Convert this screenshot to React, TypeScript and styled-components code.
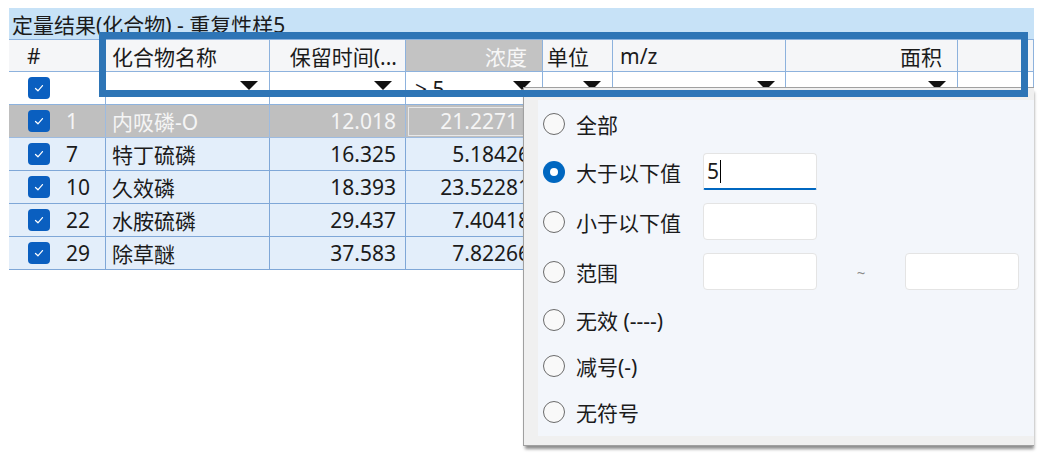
import React from "react";
import styled, { createGlobalStyle, css } from "styled-components";

const GlobalStyle = createGlobalStyle`
  * { box-sizing: border-box; }
  html, body { margin: 0; padding: 0; background: #ffffff; }
  body {
    font-family: "Noto Sans", "Noto Sans CJK SC", sans-serif;
    color: #1b1b1b;
    overflow: hidden;
  }
`;

const Page = styled.div`
  width: 1042px;
  height: 460px;
  padding: 8px 0 0 9px;
`;

const Panel = styled.div`
  position: relative;
  width: 1025px;
`;

const TitleBar = styled.div`
  height: 32px;
  background: #c7e2f7;
  border-bottom: 1px solid #8db2dd;
  display: flex;
  align-items: center;
  padding-left: 3px;
  font-size: 21px;
  white-space: nowrap;
`;

const Grid = styled.div`
  display: grid;
  grid-template-columns: 97px 164px 136px 137px 70px 173px 172px 76px;
  grid-template-rows: 32px;
  grid-auto-rows: 33px;
  font-size: 21px;
`;

type Tone = "header" | "headerActive" | "filter" | "row" | "selected";

const tones: Record<Tone, { bg: string; fg: string; line: string }> = {
  header: { bg: "#f5f6f8", fg: "#1b1b1b", line: "#8db2dd" },
  headerActive: { bg: "#c3c3c3", fg: "#f7f7f7", line: "#8db2dd" },
  filter: { bg: "#ffffff", fg: "#1b1b1b", line: "#8db2dd" },
  row: { bg: "#e3eefa", fg: "#1b1b1b", line: "#7fa7d7" },
  selected: { bg: "#bfbfbf", fg: "#f5f5f5", line: "#9dbbe0" },
};

const Cell = styled.div<{
  $tone: Tone;
  $align?: "left" | "right";
  $pl?: number;
  $pr?: number;
  $focused?: boolean;
}>`
  display: flex;
  align-items: center;
  justify-content: ${(p) => (p.$align === "right" ? "flex-end" : "flex-start")};
  padding-left: ${(p) => p.$pl ?? 6}px;
  padding-right: ${(p) => p.$pr ?? 6}px;
  background: ${(p) => tones[p.$tone].bg};
  color: ${(p) => tones[p.$tone].fg};
  border-right: 1px solid ${(p) => tones[p.$tone].line};
  border-bottom: 1px solid ${(p) => tones[p.$tone].line};
  white-space: nowrap;
  overflow: hidden;
  ${(p) =>
    p.$focused &&
    css`
      outline: 1px solid #e8e8e8;
      outline-offset: -3px;
    `}
`;

const FilterCell = styled.div<{ $pl?: number; $pr?: number }>`
  display: flex;
  align-items: flex-start;
  justify-content: space-between;
  padding: 0 ${(p) => p.$pr ?? 11}px 0 ${(p) => p.$pl ?? 9}px;
  background: #ffffff;
  border-right: 1px solid #8db2dd;
  border-bottom: 1px solid #8db2dd;
  overflow: hidden;
  white-space: nowrap;
`;

const FilterText = styled.span`
  margin-top: 7px;
  line-height: 21px;
  font-size: 21px;
`;

const DropArrow = styled.span`
  margin-top: 9px;
  margin-left: auto;
  width: 0;
  height: 0;
  border-left: 9px solid transparent;
  border-right: 9px solid transparent;
  border-top: 9px solid #111111;
`;

const IndexCell = styled.div<{ $tone: Tone }>`
  display: flex;
  align-items: center;
  gap: 16px;
  padding-left: 19px;
  background: ${(p) => tones[p.$tone].bg};
  color: ${(p) => tones[p.$tone].fg};
  border-right: 1px solid ${(p) => tones[p.$tone].line};
  border-bottom: 1px solid ${(p) => tones[p.$tone].line};
`;

const CheckBox = styled.span`
  flex: none;
  width: 22px;
  height: 22px;
  border-radius: 4px;
  background: #0a5fc0;
  display: inline-flex;
  align-items: center;
  justify-content: center;
`;

const Popup = styled.div`
  position: absolute;
  left: 514px;
  top: 79px;
  width: 511px;
  height: 359px;
  background: #f0f0f0;
  border: 1px solid #a0a0a0;
  border-right: none;
  box-shadow: 1px 4px 3px -1px rgba(0, 0, 0, 0.45);
  padding: 12px 0 9px 14px;
  z-index: 2;
`;

const PopupBody = styled.div`
  height: 100%;
  background: #f3f6fb;
  padding: 7px 0 0 5px;
  display: flex;
  flex-direction: column;
  gap: 13px;
`;

const OptionRow = styled.div<{ $tall?: boolean }>`
  display: grid;
  grid-template-columns: 160px 114px 88px 114px;
  align-items: center;
  height: ${(p) => (p.$tall ? 37 : 33)}px;
`;

const RadioLabel = styled.label`
  display: flex;
  align-items: center;
  gap: 11px;
  font-size: 21px;
  white-space: nowrap;
  color: #1b1b1b;
`;

const Radio = styled.span<{ $checked?: boolean }>`
  flex: none;
  width: 22px;
  height: 22px;
  border-radius: 50%;
  display: flex;
  align-items: center;
  justify-content: center;
  ${(p) =>
    p.$checked
      ? css`
          background: #0067c0;
          &::after {
            content: "";
            width: 8px;
            height: 8px;
            border-radius: 50%;
            background: #ffffff;
          }
        `
      : css`
          border: 1.5px solid #6b6b6b;
          background: #f9f9f9;
        `}
`;

const ValueBox = styled.div<{ $focused?: boolean }>`
  height: 37px;
  background: #ffffff;
  border: 1px solid #e4e4e4;
  border-radius: 4px;
  display: flex;
  align-items: center;
  padding-left: 3px;
  font-size: 21px;
  ${(p) =>
    p.$focused &&
    css`
      border-bottom: 2px solid #0067c0;
      border-radius: 4px 4px 2px 2px;
    `}
`;

const Caret = styled.span`
  width: 1px;
  height: 23px;
  margin-left: 1px;
  background: #000000;
`;

const Tilde = styled.span`
  text-align: center;
  color: #8a8a8a;
  font-size: 15px;
`;

const Highlight = styled.div`
  position: absolute;
  left: 90px;
  top: 24px;
  width: 929px;
  height: 65px;
  border: 7px solid #2e75b6;
  z-index: 3;
  pointer-events: none;
`;

const Check = () => (
  <svg width="14" height="14" viewBox="0 0 16 16">
    <polyline
      points="4,8.5 6.8,11.2 12,5.2"
      fill="none"
      stroke="#ffffff"
      strokeWidth="1.4"
      strokeLinecap="round"
      strokeLinejoin="round"
    />
  </svg>
);

const headers: { label: string; align: "left" | "right"; pl?: number; pr?: number; active?: boolean }[] = [
  { label: "#", align: "left", pl: 18 },
  { label: "化合物名称", align: "left", pl: 6 },
  { label: "保留时间(...", align: "right", pr: 8 },
  { label: "浓度", align: "right", pr: 15, active: true },
  { label: "单位", align: "left", pl: 4 },
  { label: "m/z", align: "left", pl: 7 },
  { label: "面积", align: "right", pr: 15 },
  { label: "", align: "left" },
];

const filters: { text?: string; pr: number; arrow: boolean }[] = [
  { pr: 11, arrow: true },
  { pr: 13, arrow: true },
  { text: "> 5", pr: 11, arrow: true },
  { pr: 11, arrow: true },
  { pr: 10, arrow: true },
  { pr: 11, arrow: true },
  { pr: 11, arrow: false },
];

const rows = [
  { id: 1, name: "内吸磷-O", rt: "12.018", conc: "21.2271", concPad: 24, selected: true },
  { id: 7, name: "特丁硫磷", rt: "16.325", conc: "5.18426", concPad: 12 },
  { id: 10, name: "久效磷", rt: "18.393", conc: "23.52281", concPad: 12 },
  { id: 22, name: "水胺硫磷", rt: "29.437", conc: "7.40418", concPad: 12 },
  { id: 29, name: "除草醚", rt: "37.583", conc: "7.82266", concPad: 12 },
];

const options: { label: string; input?: "single" | "range"; checked?: boolean; value?: string }[] = [
  { label: "全部" },
  { label: "大于以下值", input: "single", checked: true, value: "5" },
  { label: "小于以下值", input: "single" },
  { label: "范围", input: "range" },
  { label: "无效 (----)" },
  { label: "减号(-)" },
  { label: "无符号" },
];

export default function App() {
  return (
    <>
      <GlobalStyle />
      <Page>
        <Panel>
          <TitleBar>定量结果(化合物) - 重复性样5</TitleBar>
          <Grid>
            {headers.map((h, i) => (
              <Cell
                key={`h${i}`}
                $tone={h.active ? "headerActive" : "header"}
                $align={h.align}
                $pl={h.pl}
                $pr={h.pr}
              >
                {h.label}
              </Cell>
            ))}

            <IndexCell $tone="filter">
              <CheckBox>
                <Check />
              </CheckBox>
            </IndexCell>
            {filters.map((f, i) => (
              <FilterCell key={`f${i}`} $pr={f.pr}>
                {f.text && <FilterText>{f.text}</FilterText>}
                {f.arrow && <DropArrow />}
              </FilterCell>
            ))}

            {rows.map((r) => {
              const tone: Tone = r.selected ? "selected" : "row";
              return (
                <React.Fragment key={r.id}>
                  <IndexCell $tone={tone}>
                    <CheckBox>
                      <Check />
                    </CheckBox>
                    <span>{r.id}</span>
                  </IndexCell>
                  <Cell $tone={tone} $pl={6}>
                    {r.name}
                  </Cell>
                  <Cell $tone={tone} $align="right" $pr={9}>
                    {r.rt}
                  </Cell>
                  <Cell $tone={tone} $align="right" $pr={r.concPad} $focused={r.selected}>
                    {r.conc}
                  </Cell>
                  <Cell $tone={tone} />
                  <Cell $tone={tone} />
                  <Cell $tone={tone} />
                  <Cell $tone={tone} />
                </React.Fragment>
              );
            })}
          </Grid>

          <Popup>
            <PopupBody>
              {options.map((o) => (
                <OptionRow key={o.label} $tall={!!o.input}>
                  <RadioLabel>
                    <Radio $checked={o.checked} />
                    {o.label}
                  </RadioLabel>
                  {o.input && (
                    <ValueBox $focused={o.checked}>
                      {o.value}
                      {o.checked && <Caret />}
                    </ValueBox>
                  )}
                  {o.input === "range" && (
                    <>
                      <Tilde>~</Tilde>
                      <ValueBox />
                    </>
                  )}
                </OptionRow>
              ))}
            </PopupBody>
          </Popup>

          <Highlight />
        </Panel>
      </Page>
    </>
  );
}
